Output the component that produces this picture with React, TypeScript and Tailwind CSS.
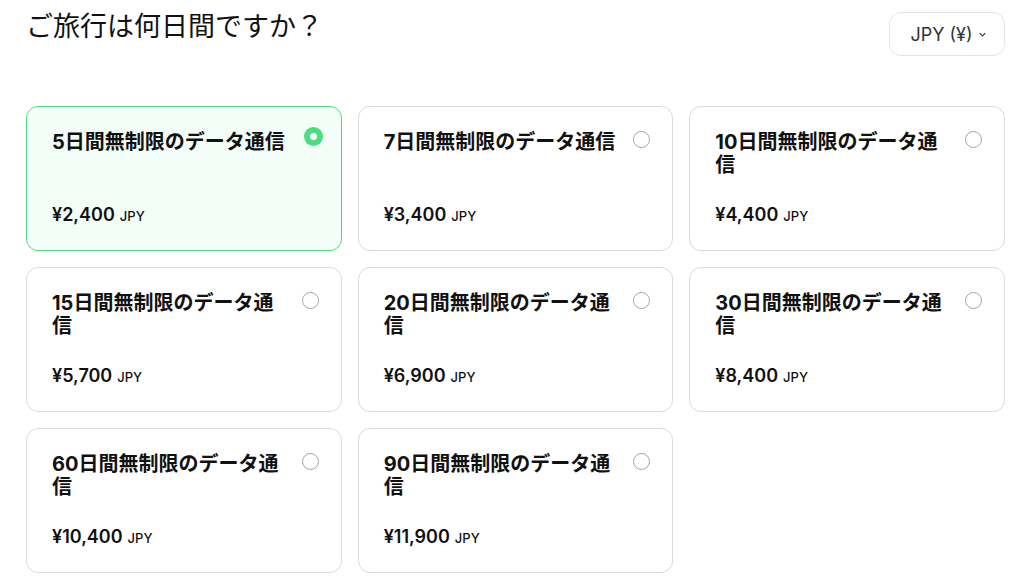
import React, { useState } from 'react';

const plans = [
  { days: 5, price: '¥2,400' },
  { days: 7, price: '¥3,400' },
  { days: 10, price: '¥4,400' },
  { days: 15, price: '¥5,700' },
  { days: 20, price: '¥6,900' },
  { days: 30, price: '¥8,400' },
  { days: 60, price: '¥10,400' },
  { days: 90, price: '¥11,900' },
];

const App = () => {
  const [selected, setSelected] = useState(5);

  return (
    <div className="min-h-screen bg-white pl-[26px] pr-[19px] font-['Inter','Noto_Sans_CJK_JP',sans-serif] text-[#111]">
      {/* Header */}
      <div className="flex items-start justify-between">
        <h1 className="text-[27px] leading-[53px] font-normal">ご旅行は何日間ですか？</h1>
        <button className="mt-3 flex h-[44px] w-[116px] items-center justify-center gap-1 rounded-xl border border-[#e5e5e5] pl-1 text-[18px] text-[#333]">
          <span>JPY (¥)</span>
          <svg width="11" height="11" viewBox="0 0 24 24" fill="none" stroke="#333" strokeWidth="2.5">
            <path d="M6 9l6 6 6-6" />
          </svg>
        </button>
      </div>

      {/* Plans */}
      <div className="mt-[50px] grid grid-cols-3 gap-4">
        {plans.map((p) => {
          const active = selected === p.days;
          return (
            <div
              key={p.days}
              onClick={() => setSelected(p.days)}
              className={`flex h-[145px] cursor-pointer flex-col justify-between rounded-xl border pt-[24px] pb-[20px] pl-[25px] pr-[22px] ${
                active ? 'border-[#4ade80] bg-[#f4fef8]' : 'border-[#dadada] bg-white'
              }`}
            >
              <div className="flex items-start gap-3">
                <div className="flex-1 text-[20px] font-bold leading-[23px]">
                  {p.days}日間無制限のデータ通信
                </div>
                {active ? (
                  <div className="-mr-[4px] -mt-[4px] flex h-[19px] w-[19px] shrink-0 items-center justify-center rounded-full bg-[#4ade80]">
                    <div className="h-[7px] w-[7px] rounded-full bg-white" />
                  </div>
                ) : (
                  <div className="h-[17px] w-[17px] shrink-0 rounded-full border border-[#a3a3a3]" />
                )}
              </div>
              <div className="flex items-baseline gap-[5px] leading-[28px]">
                <span className="text-[18px] font-semibold">{p.price}</span>
                <span className="text-[13px] font-medium">JPY</span>
              </div>
            </div>
          );
        })}
      </div>
    </div>
  );
};

export default App;
